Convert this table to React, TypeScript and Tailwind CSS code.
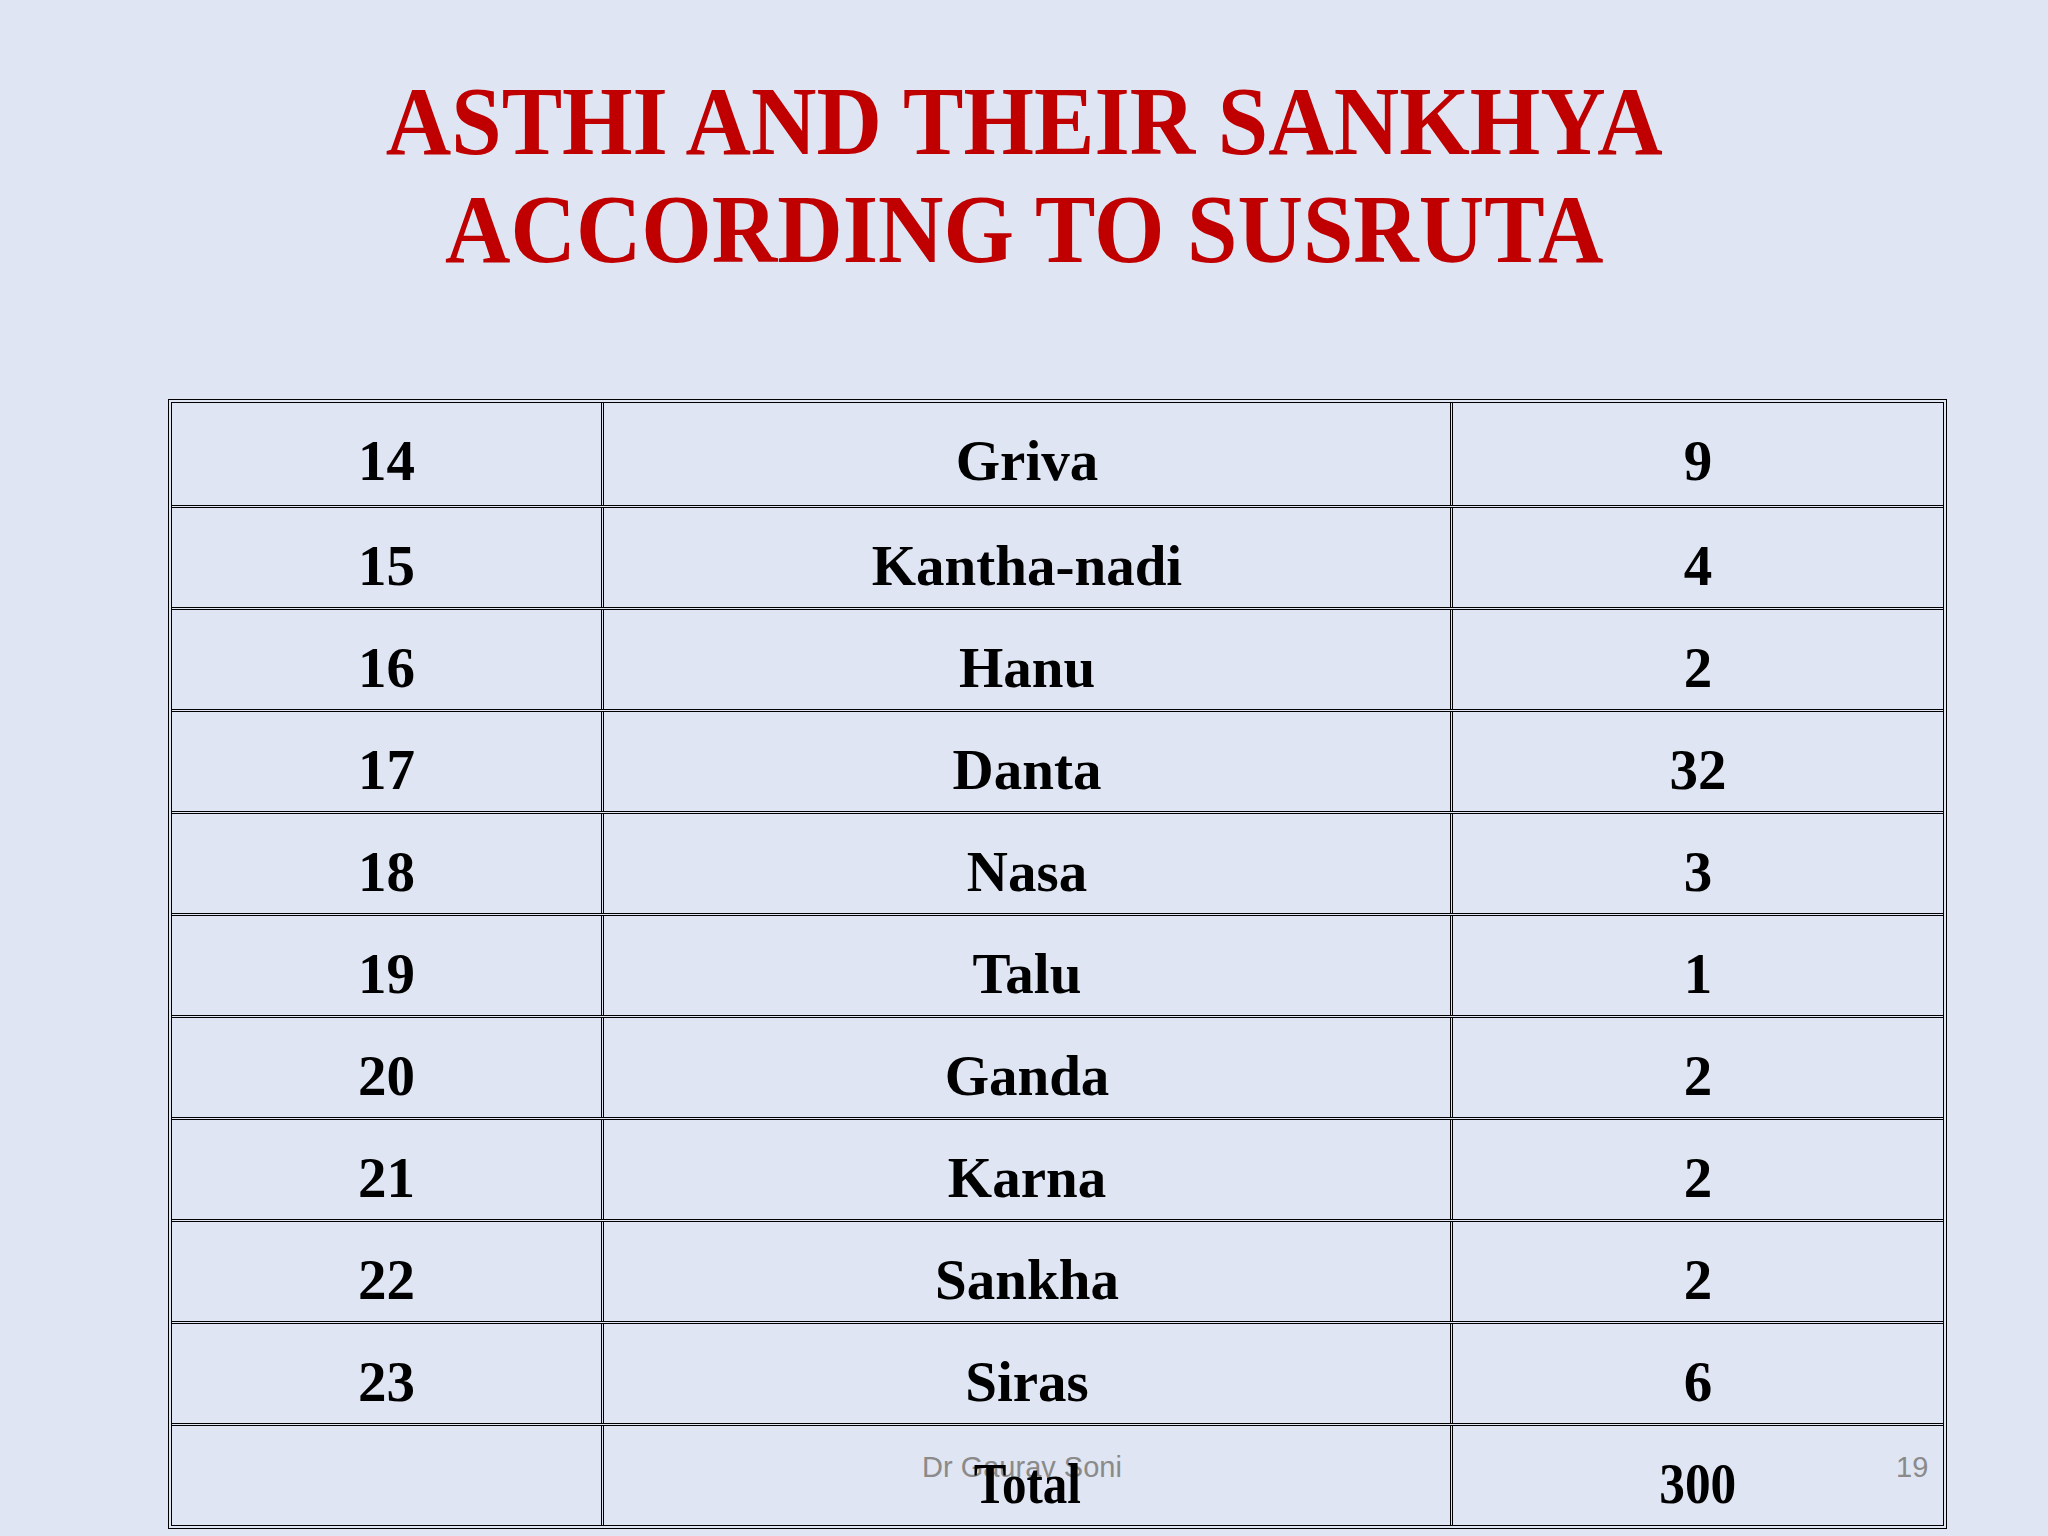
const rows: [string, string, string][] = [
  ["14", "Griva", "9"],
  ["15", "Kantha-nadi", "4"],
  ["16", "Hanu", "2"],
  ["17", "Danta", "32"],
  ["18", "Nasa", "3"],
  ["19", "Talu", "1"],
  ["20", "Ganda", "2"],
  ["21", "Karna", "2"],
  ["22", "Sankha", "2"],
  ["23", "Siras", "6"],
];

const serif = "font-['Liberation_Serif','Times_New_Roman',serif]";

function Row({ cells, first, total }: { cells: [string, string, string]; first?: boolean; total?: boolean }) {
  const cell = "flex justify-center pt-[29px] text-[57px] leading-[57px] font-bold text-black";
  return (
    <div className={`flex h-[102px] ${first ? "" : "border-t-[3px] border-double border-black"}`}>
      <div className={`${cell} w-[429px]`}>{cells[0]}</div>
      <div className={`${cell} w-[849px] border-l-[3px] border-double border-black`}>
        <span className={total ? "inline-block scale-x-[0.86]" : ""}>{cells[1]}</span>
      </div>
      <div className={`${cell} flex-1 border-l-[3px] border-double border-black`}>
        <span className={total ? "inline-block scale-x-[0.9]" : ""}>{cells[2]}</span>
      </div>
    </div>
  );
}

export default function App() {
  return (
    <div className={`relative w-[2048px] h-[1536px] overflow-hidden bg-[#dfe5f2] ${serif}`}>
      <h1 className="pt-[67px] flex flex-col items-center text-[98px] leading-[108px] font-bold text-[#c00000]">
        <span className="inline-block whitespace-nowrap scale-x-[0.925]">ASTHI AND THEIR SANKHYA</span>
        <span className="inline-block whitespace-nowrap scale-x-[0.925]">ACCORDING TO SUSRUTA</span>
      </h1>

      <div className="mt-[116px] ml-[168px] w-[1779px] border-4 border-double border-black">
        {rows.map((r, i) => (
          <Row key={r[0]} cells={r} first={i === 0} />
        ))}
        <div className="relative">
          <div className="absolute left-[750px] top-[24px] text-[29px] leading-[40px] text-[#8a8a8a] font-['Liberation_Sans',Arial,sans-serif]">
            Dr Gaurav Soni
          </div>
          <div className="absolute left-[1724px] top-[24px] text-[29px] leading-[40px] text-[#8a8a8a] font-['Liberation_Sans',Arial,sans-serif]">
            19
          </div>
          <div className="relative">
            <Row cells={["", "Total", "300"]} total />
          </div>
        </div>
      </div>
    </div>
  );
}
